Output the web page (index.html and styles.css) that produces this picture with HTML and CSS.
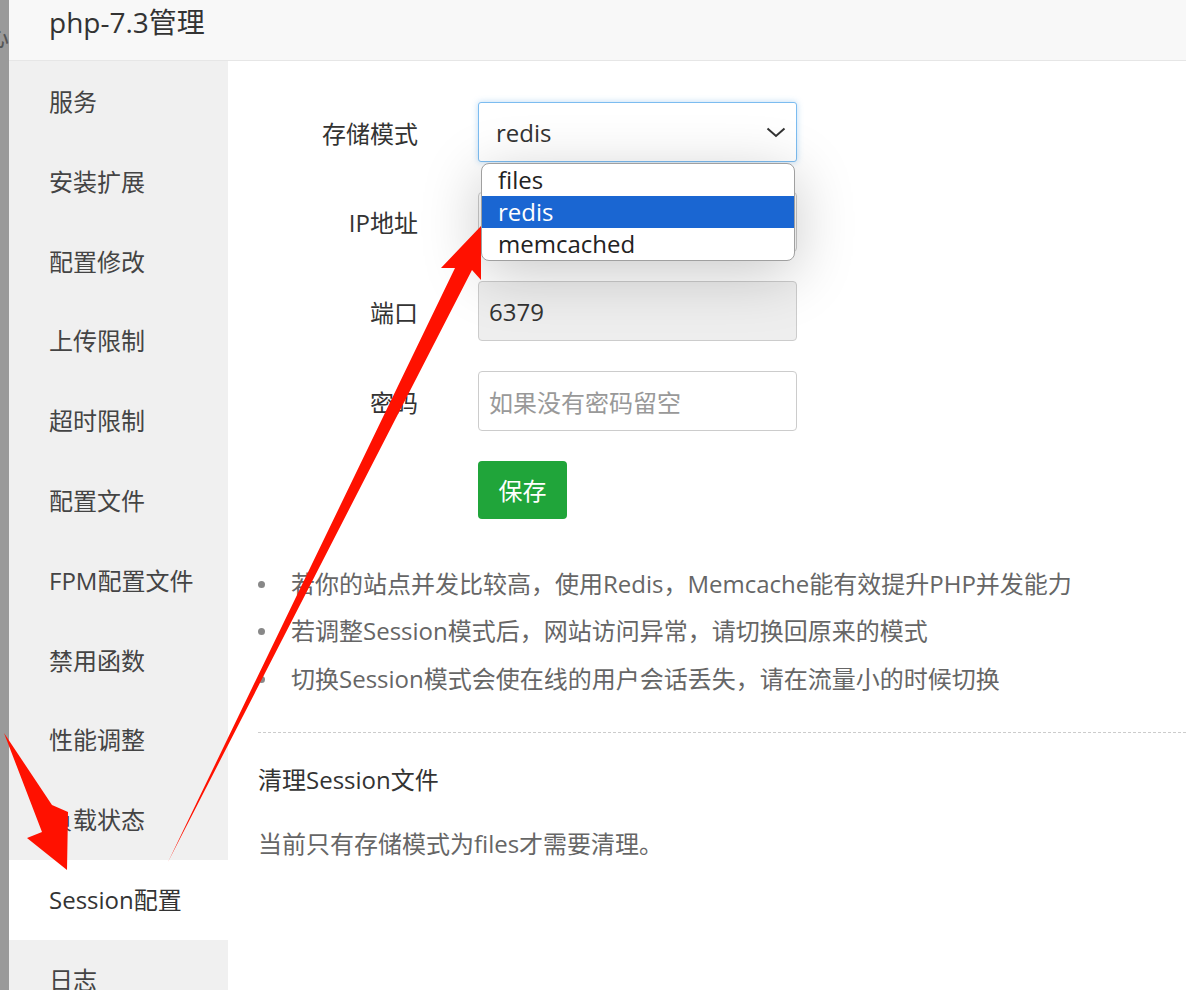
FILE: index.html
```html
<!DOCTYPE html>
<html lang="zh-CN">
<head>
<meta charset="utf-8">
<title>php-7.3管理</title>
<link rel="stylesheet" href="styles.css">
</head>
<body>
<div class="page">
  <div class="strip"><span class="strip-char">心</span></div>
  <div class="window">
    <header class="title">php-7.3管理</header>
    <div class="main">
      <nav class="side">
        <div class="side-item">服务</div>
        <div class="side-item">安装扩展</div>
        <div class="side-item">配置修改</div>
        <div class="side-item">上传限制</div>
        <div class="side-item">超时限制</div>
        <div class="side-item">配置文件</div>
        <div class="side-item">FPM配置文件</div>
        <div class="side-item">禁用函数</div>
        <div class="side-item">性能调整</div>
        <div class="side-item">负载状态</div>
        <div class="side-item active">Session配置</div>
        <div class="side-item">日志</div>
      </nav>
      <section class="content">
        <div class="form">
          <div class="row">
            <label class="label">存储模式</label>
            <div class="field select-wrap">
              <div class="select">
                <span>redis</span>
                <svg class="chevron" width="20" height="11" viewBox="0 0 20 11"><path d="M1.5 1.5 L10 9 L18.5 1.5" fill="none" stroke="#333" stroke-width="2"/></svg>
              </div>
              <div class="dropdown">
                <div class="opt">files</div>
                <div class="opt selected">redis</div>
                <div class="opt">memcached</div>
              </div>
            </div>
          </div>
          <div class="row">
            <label class="label">IP地址</label>
            <div class="field"><div class="input"></div></div>
          </div>
          <div class="row">
            <label class="label">端口</label>
            <div class="field"><div class="input disabled">6379</div></div>
          </div>
          <div class="row">
            <label class="label">密码</label>
            <div class="field"><div class="input placeholder">如果没有密码留空</div></div>
          </div>
          <div class="row">
            <span class="label"></span>
            <div class="field"><button class="btn">保存</button></div>
          </div>
        </div>
        <ul class="tips">
          <li>若你的站点并发比较高，使用Redis，Memcache能有效提升PHP并发能力</li>
          <li>若调整Session模式后，网站访问异常，请切换回原来的模式</li>
          <li>切换Session模式会使在线的用户会话丢失，请在流量小的时候切换</li>
        </ul>
        <div class="divider"></div>
        <h3 class="sub-title">清理Session文件</h3>
        <p class="note">当前只有存储模式为files才需要清理。</p>
      </section>
    </div>
  </div>
  <svg class="arrows" width="1186" height="990" viewBox="0 0 1186 990">
    <polygon fill="#ff1100" points="481,226 481,280 472,270 168,862 455,268 441,268"/>
    <polygon fill="#ff1100" points="4,733 52,805 68,812 67,870 27,838 42,832"/>
  </svg>
</div>
</body>
</html>
```

FILE: styles.css
```css
html, body {
  margin: 0;
  padding: 0;
}
body {
  width: 1186px;
  height: 990px;
  overflow: hidden;
  background: #fff;
  font-family: "Open Sans", "Noto Sans CJK SC", sans-serif;
  color: #333;
}
.page {
  position: relative;
  display: flex;
  width: 1186px;
  height: 990px;
}
.strip {
  width: 9px;
  flex: none;
  background: #9a9a9a;
  overflow: hidden;
  position: relative;
}
.strip-char {
  position: absolute;
  left: -15px;
  top: 22px;
  font-size: 24px;
  color: #555;
  line-height: 30px;
}
.window {
  flex: 1;
  display: flex;
  flex-direction: column;
  min-width: 0;
}
.title {
  height: 61px;
  box-sizing: border-box;
  flex: none;
  background: #f8f8f8;
  border-bottom: 1px solid #e6e6e6;
  padding-left: 40px;
  font-size: 28px;
  line-height: 44px;
  color: #333;
}
.main {
  flex: 1;
  display: flex;
  min-height: 0;
}
.side {
  width: 219px;
  flex: none;
  background: #f0f0f0;
  padding-top: 1px;
}
.side-item {
  height: 79.8px;
  line-height: 79.8px;
  padding-left: 40px;
  font-size: 24px;
  color: #444;
  white-space: nowrap;
}
.side-item.active {
  background: #fff;
  color: #333;
}
.content {
  flex: 1;
  padding: 41px 0 0 30px;
  min-width: 0;
}
.form {
  display: flex;
  flex-direction: column;
  gap: 29.7px;
}
.row {
  display: flex;
  align-items: center;
  height: 60px;
}
.label {
  width: 160px;
  flex: none;
  text-align: right;
  font-size: 24px;
  color: #333;
  margin-right: 60px;
}
.field {
  position: relative;
  width: 319px;
  height: 60px;
}
.select {
  box-sizing: border-box;
  height: 60px;
  border: 1px solid #7cbcf0;
  border-radius: 3px;
  box-shadow: 0 0 6px rgba(102, 175, 233, 0.45);
  background: #fff;
  display: flex;
  align-items: center;
  justify-content: space-between;
  padding: 0 10px 0 17px;
  font-size: 24px;
  color: #333;
}
.chevron {
  display: block;
}
.dropdown {
  position: absolute;
  left: 3px;
  top: 61px;
  width: 314px;
  box-sizing: border-box;
  padding: 0;
  background: #fff;
  border: 1px solid #a0a0a0;
  border-radius: 8px;
  overflow: hidden;
  box-shadow: 0 12px 60px rgba(0, 0, 0, 0.22);
  z-index: 5;
}
.opt {
  height: 32px;
  line-height: 32px;
  padding-left: 16px;
  font-size: 24px;
  color: #222;
}
.opt.selected {
  background: #1a66d2;
  color: #fff;
}
.input {
  box-sizing: border-box;
  height: 60px;
  border: 1px solid #ccc;
  border-radius: 4px;
  padding-left: 10px;
  display: flex;
  align-items: center;
  font-size: 24px;
  color: #333;
  background: #fff;
}
.input.disabled {
  background: #eee;
}
.input.placeholder {
  color: #999;
}
.btn {
  width: 89px;
  height: 58px;
  border: none;
  border-radius: 4px;
  background: #20a53a;
  color: #fff;
  font-family: "Open Sans", "Noto Sans CJK SC", sans-serif;
  font-size: 24px;
  padding: 0;
}
.tips {
  list-style: none;
  margin: 39px 0 0;
  padding: 0;
}
.tips li {
  position: relative;
  padding-left: 33px;
  line-height: 47.5px;
  font-size: 24px;
  color: #666;
  white-space: nowrap;
}
.tips li::before {
  content: "";
  position: absolute;
  left: 0;
  top: 21px;
  width: 7px;
  height: 7px;
  border-radius: 50%;
  background: #888;
}
.divider {
  margin-top: 30px;
  border-top: 1px dashed #ccc;
}
.sub-title {
  margin: 30px 0 0;
  font-weight: normal;
  font-size: 24px;
  line-height: 34px;
  color: #333;
}
.note {
  margin: 30px 0 0;
  font-size: 24px;
  line-height: 34px;
  color: #666;
}
.arrows {
  position: absolute;
  left: 0;
  top: 0;
  pointer-events: none;
  z-index: 10;
}
```
